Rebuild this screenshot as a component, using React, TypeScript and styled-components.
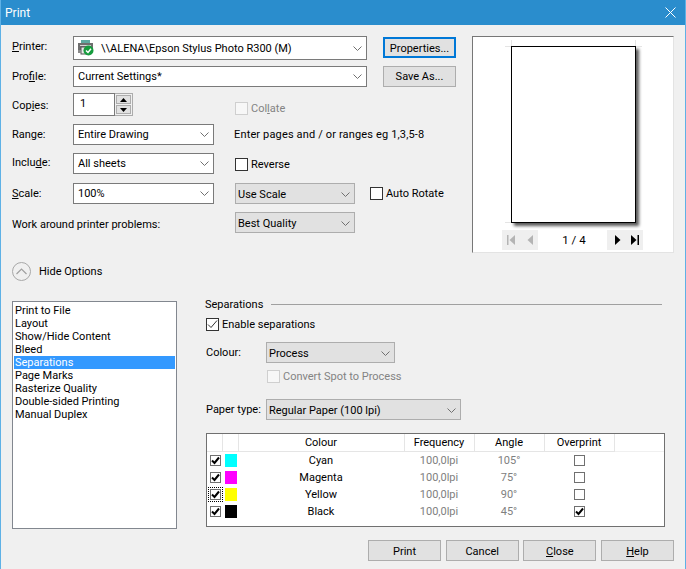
import React from "react";
import styled, { createGlobalStyle } from "styled-components";

const GlobalStyle = createGlobalStyle`
    html, body {
        margin: 0;
        padding: 0;
        background: #f0f0f0;
    }
    body {
        font-family: Roboto, "Noto Sans", sans-serif;
        font-size: 11px;
        color: #000;
    }
`;

const Window = styled.div`
    width: 686px;
    height: 569px;
    box-sizing: border-box;
    background: #f0f0f0;
    border-left: 1px solid #5eb1e6;
    border-right: 1px solid #5eb1e6;
    overflow: hidden;
`;

const TitleBar = styled.div`
    height: 25px;
    margin: 0 -1px;
    background: #2a8dcd;
    color: #fff;
    font-size: 12px;
    display: flex;
    align-items: center;
    justify-content: space-between;
    padding: 0 10px 0 5px;
`;

const TopArea = styled.div`
    display: flex;
    align-items: flex-start;
    padding: 11px 0 0 11px;
    height: 217px;
`;

const FormGrid = styled.div`
    display: grid;
    width: 460px;
    flex-shrink: 0;
    grid-template-columns: 61px 141px 21px 120px 12px 16px 73px;
    grid-template-rows: 30px 27px 31px 29px 30px 29px 22px;
    align-items: start;
`;

const Label = styled.div<{ $span?: number; $drop?: number }>`
    grid-column: 1 / ${(p) => (p.$span ? 1 + p.$span : 2)};
    line-height: 21px;
    margin-top: ${(p) => p.$drop ?? 0}px;
    white-space: nowrap;
`;

const Field = styled.div<{ $col: number; $end: number; $tall?: boolean; $plain?: boolean }>`
    grid-column: ${(p) => p.$col} / ${(p) => p.$end};
    box-sizing: border-box;
    height: ${(p) => (p.$tall ? 24 : 21)}px;
    display: flex;
    align-items: center;
    justify-content: space-between;
    padding: ${(p) => (p.$plain ? 1 : 0)}px 4px 0 ${(p) => (p.$plain ? 2 : 4)}px;
    background: ${(p) => (p.$plain ? "#e1e1e1" : "#fff")};
    border: 1px solid ${(p) => (p.$plain ? "#adadad" : "#7a7a7a")};
    white-space: nowrap;
`;

const ValueGroup = styled.span`
    display: flex;
    align-items: center;
    gap: 7px;
`;

const SideButton = styled.button<{ $focused?: boolean }>`
    grid-column: 7 / 8;
    height: 21px;
    margin-top: ${(p) => (p.$focused ? 1 : 0)}px;
    padding: ${(p) => (p.$focused ? 1 : 0)}px 0 0;
    background: #e1e1e1;
    border: ${(p) => (p.$focused ? "2px solid #0078d7" : "1px solid #adadad")};
    font: inherit;
    color: inherit;
`;

const SpinWrap = styled.div`
    grid-column: 2 / 3;
    display: flex;
    height: 23px;
    width: 60px;
`;

const SpinInput = styled.div`
    box-sizing: border-box;
    width: 42px;
    height: 23px;
    border: 1px solid #7a7a7a;
    background: #fff;
    padding-left: 6px;
    line-height: 20px;
`;

const SpinButtons = styled.div`
    box-sizing: border-box;
    width: 18px;
    height: 23px;
    border: 1px solid #acacac;
    border-left: none;
    padding: 1px;
    display: flex;
    flex-direction: column;
    gap: 1px;
`;

const SpinButton = styled.div`
    flex: 1;
    background: #e1e1e1;
    border: 1px solid #adadad;
    display: flex;
    align-items: center;
    justify-content: center;
`;

const CheckRow = styled.div<{ $col?: number; $end?: number; $disabled?: boolean; $drop?: number; $inset?: number }>`
    grid-column: ${(p) => p.$col ?? 4} / ${(p) => p.$end ?? 8};
    display: flex;
    align-items: center;
    gap: 3px;
    height: 21px;
    margin-top: ${(p) => p.$drop ?? 0}px;
    margin-left: ${(p) => p.$inset ?? 0}px;
    white-space: nowrap;
    color: ${(p) => (p.$disabled ? "#838383" : "#000")};
`;

const Box = styled.span<{ $disabled?: boolean; $small?: boolean; $focus?: boolean }>`
    box-sizing: border-box;
    display: inline-flex;
    align-items: center;
    justify-content: center;
    flex-shrink: 0;
    width: ${(p) => (p.$small ? 11 : 13)}px;
    height: ${(p) => (p.$small ? 11 : 13)}px;
    background: ${(p) => (p.$disabled ? "#f7f7f7" : "#fff")};
    border: 1px solid ${(p) => (p.$disabled ? "#cfcfcf" : p.$small ? "#707070" : "#333")};
    outline: ${(p) => (p.$focus ? "1px dotted #000" : "none")};
    outline-offset: 1px;
`;

const Hint = styled.div`
    grid-column: 4 / 8;
    line-height: 21px;
    white-space: nowrap;
    margin-left: -1px;
    letter-spacing: 0.15px;
`;

const Preview = styled.div`
    box-sizing: border-box;
    width: 202px;
    height: 217px;
    flex-shrink: 0;
    background: #fff;
    border-style: solid;
    border-width: 1px;
    border-color: #777 #e3e3e3 #e3e3e3 #777;
    display: flex;
    flex-direction: column;
    align-items: center;
    padding-top: 9px;
`;

const Page = styled.div`
    position: relative;
    box-sizing: border-box;
    width: 125px;
    height: 177px;
    flex-shrink: 0;
    background: #fff;
    border: 1px solid #000;
    box-shadow: 3px 3px 3px rgba(0, 0, 0, 0.65);
`;

const CropMark = styled.i<{ $top?: boolean; $right?: boolean; $bottom?: boolean }>`
    position: absolute;
    background: #e4e4e4;
    width: ${(p) => (p.$top ? 1 : 6)}px;
    height: ${(p) => (p.$top ? 6 : 1)}px;
    top: ${(p) => (p.$top ? -7 : p.$bottom ? 175 : -1)}px;
    left: ${(p) => (p.$top ? (p.$right ? 123 : -1) : p.$right ? 124 : -7)}px;
`;

const PageNav = styled.div`
    display: flex;
    align-items: center;
    justify-content: space-between;
    width: 141px;
    height: 20px;
    margin-top: 7px;
    margin-left: -1px;
`;

const NavGroup = styled.div<{ $shift?: boolean }>`
    box-sizing: border-box;
    width: 36px;
    height: 20px;
    padding-left: ${(p) => (p.$shift ? 3 : 0)}px;
    background: #efefef;
    display: flex;
    align-items: center;
    justify-content: space-around;
`;

const PageCount = styled.span`
    font-size: 11.5px;
    padding-left: 3px;
`;

const OptionsToggle = styled.div`
    display: flex;
    align-items: center;
    gap: 8px;
    height: 19px;
    margin: 9px 0 16px 11px;
`;

const Circle = styled.span`
    box-sizing: border-box;
    width: 19px;
    height: 19px;
    border-radius: 50%;
    border: 1px solid #a8a8a8;
    display: flex;
    align-items: center;
    justify-content: center;
`;

const BottomArea = styled.div`
    display: flex;
    align-items: flex-start;
    padding-left: 11px;
    height: 243px;
`;

const ListBox = styled.ul`
    box-sizing: border-box;
    width: 165px;
    height: 228px;
    margin: 4px 28px 0 0;
    padding: 2px 1px 0;
    list-style: none;
    background: #fff;
    border: 1px solid #82878f;
`;

const ListItem = styled.li<{ $selected?: boolean }>`
    height: 13px;
    line-height: 13px;
    padding-left: 1px;
    white-space: nowrap;
    background: ${(p) => (p.$selected ? "#3399ff" : "transparent")};
    color: ${(p) => (p.$selected ? "#fff" : "#000")};
`;

const Pane = styled.div`
    width: 460px;
    padding-left: 1px;
    box-sizing: border-box;
`;

const SectionHead = styled.div`
    display: flex;
    align-items: center;
    gap: 8px;
    height: 14px;
    margin: 0 3px 0 -1px;
    &::after {
        content: "";
        flex: 1;
        height: 1px;
        background: #a0a0a0;
        margin-top: 1px;
    }
`;

const PaneCheck = styled.div<{ $disabled?: boolean; $indent?: number; $gap: number }>`
    display: flex;
    align-items: center;
    gap: 3px;
    height: 14px;
    margin-top: ${(p) => p.$gap}px;
    padding-left: ${(p) => p.$indent ?? 0}px;
    color: ${(p) => (p.$disabled ? "#838383" : "#000")};
`;

const PaneRow = styled.div<{ $gap: number }>`
    display: flex;
    align-items: center;
    height: 21px;
    margin-top: ${(p) => p.$gap}px;
`;

const PaneLabel = styled.span`
    width: 60px;
    flex-shrink: 0;
    white-space: nowrap;
`;

const PaneSelect = styled.div<{ $width: number }>`
    box-sizing: border-box;
    width: ${(p) => p.$width}px;
    height: 21px;
    display: flex;
    align-items: center;
    justify-content: space-between;
    padding: 1px 4px 0 2px;
    background: #e1e1e1;
    border: 1px solid #adadad;
`;

const TableFrame = styled.div`
    box-sizing: border-box;
    width: 459px;
    height: 94px;
    margin-top: 13px;
    background: #fff;
    border: 1px solid #707070;
`;

const ColourTable = styled.table`
    width: 100%;
    table-layout: fixed;
    border-collapse: collapse;
`;

const Head = styled.th`
    height: 17px;
    padding: 0;
    font-weight: 400;
    text-align: center;
    border-right: 1px solid #e5e5e5;
    border-bottom: 1px solid #e5e5e5;
`;

const BlankHead = styled.th`
    padding: 0;
    border-bottom: 1px solid #f0f0f0;
`;

const Cell = styled.td<{ $muted?: boolean }>`
    height: 17px;
    padding: 0;
    text-align: center;
    color: ${(p) => (p.$muted ? "#808080" : "#000")};
`;

const CheckCell = styled.td`
    padding: 0 0 0 3px;
    line-height: 0;
`;

const CenterCell = styled.td`
    padding: 0;
    line-height: 0;
    text-align: center;
    & > span {
        display: inline-flex;
    }
`;

const Swatch = styled.span<{ $color: string }>`
    display: block;
    width: 12px;
    height: 13px;
    margin-left: 2px;
    background: ${(p) => p.$color};
`;

const Footer = styled.div`
    display: flex;
    justify-content: flex-end;
    gap: 4.67px;
    padding-right: 11px;
`;

const FooterButton = styled.button`
    width: 73px;
    height: 21px;
    padding: 1px 0 0;
    background: #e1e1e1;
    border: 1px solid #adadad;
    font: inherit;
    color: inherit;
`;

const Chevron = ({ color = "#707070" }: { color?: string }) => (
    <svg width="9" height="5" viewBox="0 0 9 5">
        <path d="M0.5 0.5 L4.5 4.5 L8.5 0.5" fill="none" stroke={color} strokeWidth="1" />
    </svg>
);

const Tick = ({ small }: { small?: boolean }) =>
    small ? (
        <svg width="9" height="9" viewBox="0 0 9 9">
            <path d="M1 4.5 L3.5 7 L8 1.5" fill="none" stroke="#000" strokeWidth="2" />
        </svg>
    ) : (
        <svg width="11" height="11" viewBox="0 0 11 11">
            <path d="M1 5.5 L4 8.5 L10 1.5" fill="none" stroke="#333" strokeWidth="1" />
        </svg>
    );

const PrinterIcon = () => (
    <svg width="16" height="16" viewBox="0 0 16 16">
        <rect x="3" y="0" width="9" height="3" fill="#5fa9a0" />
        <rect x="0" y="3" width="15" height="7" fill="#6e6e6e" />
        <rect x="2" y="5" width="11" height="1" fill="#d8d8d8" />
        <rect x="3" y="7" width="8" height="7" fill="#e8e8e8" stroke="#555" strokeWidth="1" />
        <rect x="0" y="10" width="3" height="3" fill="#8a8a8a" />
        <circle cx="10.5" cy="10.5" r="5" fill="#169c3e" />
        <path d="M8 10.5 L10 12.5 L13 8.8" fill="none" stroke="#fff" strokeWidth="1.5" />
    </svg>
);

const NavIcon = ({ kind, off }: { kind: "first" | "prev" | "next" | "last"; off?: boolean }) => {
    const fill = off ? "#b4b4b4" : "#000";
    return (
        <svg width="9" height="10" viewBox="0 0 9 10">
            {kind === "first" && <rect x="0" y="0" width="1.5" height="10" fill={fill} />}
            {kind === "last" && <rect x="7.5" y="0" width="1.5" height="10" fill={fill} />}
            {(kind === "first" || kind === "prev") && <polygon points="8,0 8,10 2.5,5" fill={fill} />}
            {(kind === "next" || kind === "last") && <polygon points="1,0 1,10 6.5,5" fill={fill} />}
        </svg>
    );
};

const options = [
    "Print to File",
    "Layout",
    "Show/Hide Content",
    "Bleed",
    "Separations",
    "Page Marks",
    "Rasterize Quality",
    "Double-sided Printing",
    "Manual Duplex",
];

const inks = [
    { name: "Cyan", color: "#00ffff", angle: "105°", overprint: false },
    { name: "Magenta", color: "#ff00ff", angle: "75°", overprint: false },
    { name: "Yellow", color: "#ffff00", angle: "90°", overprint: false, focus: true },
    { name: "Black", color: "#000000", angle: "45°", overprint: true },
];

export default function App() {
    return (
        <Window>
            <GlobalStyle />
            <TitleBar>
                <span>Print</span>
                <svg width="11" height="11" viewBox="0 0 11 11">
                    <path d="M0.5 0.5 L10.5 10.5 M10.5 0.5 L0.5 10.5" stroke="#fff" strokeWidth="1" />
                </svg>
            </TitleBar>

            <TopArea>
                <FormGrid>
                    <Label><u>P</u>rinter:</Label>
                    <Field $col={2} $end={6} $tall>
                        <ValueGroup>
                            <PrinterIcon />
                            <span>\\ALENA\Epson Stylus Photo R300 (M)</span>
                        </ValueGroup>
                        <Chevron />
                    </Field>
                    <SideButton $focused>Properties...</SideButton>

                    <Label>Pro<u>f</u>ile:</Label>
                    <Field $col={2} $end={6}>
                        <span>Current Settings*</span>
                        <Chevron />
                    </Field>
                    <SideButton>Save As...</SideButton>

                    <Label $drop={2}>Cop<u>i</u>es:</Label>
                    <SpinWrap>
                        <SpinInput>1</SpinInput>
                        <SpinButtons>
                            <SpinButton>
                                <svg width="7" height="4" viewBox="0 0 7 4"><polygon points="3.5,0 7,4 0,4" fill="#000" /></svg>
                            </SpinButton>
                            <SpinButton>
                                <svg width="7" height="4" viewBox="0 0 7 4"><polygon points="0,0 7,0 3.5,4" fill="#000" /></svg>
                            </SpinButton>
                        </SpinButtons>
                    </SpinWrap>
                    <CheckRow $disabled $drop={5}>
                        <Box $disabled />
                        <span>Col<u>l</u>ate</span>
                    </CheckRow>

                    <Label>Ran<u>g</u>e:</Label>
                    <Field $col={2} $end={3}>
                        <span>Entire Drawing</span>
                        <Chevron />
                    </Field>
                    <Hint>Enter pages and / or ranges eg 1,3,5-8</Hint>

                    <Label $drop={-1}>Inclu<u>d</u>e:</Label>
                    <Field $col={2} $end={3}>
                        <span>All sheets</span>
                        <Chevron />
                    </Field>
                    <CheckRow $drop={1}>
                        <Box />
                        <span>Reverse</span>
                    </CheckRow>

                    <Label><u>S</u>cale:</Label>
                    <Field $col={2} $end={3}>
                        <span>100%</span>
                        <Chevron />
                    </Field>
                    <Field $col={4} $end={5} $plain>
                        <span>Use Scale</span>
                        <Chevron />
                    </Field>
                    <CheckRow $col={6} $end={8} $inset={3}>
                        <Box />
                        <span>Auto Rotate</span>
                    </CheckRow>

                    <Label $span={2} $drop={2}>Work around printer problems:</Label>
                    <Field $col={4} $end={5} $plain>
                        <span>Best Quality</span>
                        <Chevron />
                    </Field>
                </FormGrid>

                <Preview>
                    <Page>
                        <CropMark $top />
                        <CropMark $top $right />
                        <CropMark />
                        <CropMark $right />
                        <CropMark $bottom />
                    </Page>
                    <PageNav>
                        <NavGroup>
                            <NavIcon kind="first" off />
                            <NavIcon kind="prev" off />
                        </NavGroup>
                        <PageCount>1 / 4</PageCount>
                        <NavGroup $shift>
                            <NavIcon kind="next" />
                            <NavIcon kind="last" />
                        </NavGroup>
                    </PageNav>
                </Preview>
            </TopArea>

            <OptionsToggle>
                <Circle>
                    <svg width="11" height="7" viewBox="0 0 11 7">
                        <path d="M0.5 6 L5.5 1 L10.5 6" fill="none" stroke="#a0a0a0" strokeWidth="1.2" />
                    </svg>
                </Circle>
                <span>Hide Options</span>
            </OptionsToggle>

            <BottomArea>
                <ListBox>
                    {options.map((o) => (
                        <ListItem key={o} $selected={o === "Separations"}>{o}</ListItem>
                    ))}
                </ListBox>
                <Pane>
                    <SectionHead>Separations</SectionHead>
                    <PaneCheck $gap={6}>
                        <Box><Tick /></Box>
                        <span>Enable separations</span>
                    </PaneCheck>
                    <PaneRow $gap={11}>
                        <PaneLabel>Colour:</PaneLabel>
                        <PaneSelect $width={129}>
                            <span>Process</span>
                            <Chevron />
                        </PaneSelect>
                    </PaneRow>
                    <PaneCheck $gap={6} $indent={61} $disabled>
                        <Box $disabled />
                        <span>Convert Spot to Process</span>
                    </PaneCheck>
                    <PaneRow $gap={16}>
                        <PaneLabel>Paper type:</PaneLabel>
                        <PaneSelect $width={195}>
                            <span>Regular Paper (100 lpi)</span>
                            <Chevron />
                        </PaneSelect>
                    </PaneRow>
                    <TableFrame>
                        <ColourTable>
                            <colgroup>
                                <col width="15" />
                                <col width="16" />
                                <col width="166" />
                                <col width="70" />
                                <col width="70" />
                                <col width="70" />
                                <col />
                            </colgroup>
                            <thead>
                                <tr>
                                    <Head />
                                    <Head />
                                    <Head>Colour</Head>
                                    <Head>Frequency</Head>
                                    <Head>Angle</Head>
                                    <Head>Overprint</Head>
                                    <BlankHead />
                                </tr>
                            </thead>
                            <tbody>
                                {inks.map((ink) => (
                                    <tr key={ink.name}>
                                        <CheckCell>
                                            <Box $small $focus={ink.focus}><Tick small /></Box>
                                        </CheckCell>
                                        <td><Swatch $color={ink.color} /></td>
                                        <Cell>{ink.name}</Cell>
                                        <Cell $muted>100,0lpi</Cell>
                                        <Cell $muted>{ink.angle}</Cell>
                                        <CenterCell>
                                            <Box $small>{ink.overprint && <Tick small />}</Box>
                                        </CenterCell>
                                        <td />
                                    </tr>
                                ))}
                            </tbody>
                        </ColourTable>
                    </TableFrame>
                </Pane>
            </BottomArea>

            <Footer>
                <FooterButton>Print</FooterButton>
                <FooterButton>Cancel</FooterButton>
                <FooterButton><u>C</u>lose</FooterButton>
                <FooterButton><u>H</u>elp</FooterButton>
            </Footer>
        </Window>
    );
}
